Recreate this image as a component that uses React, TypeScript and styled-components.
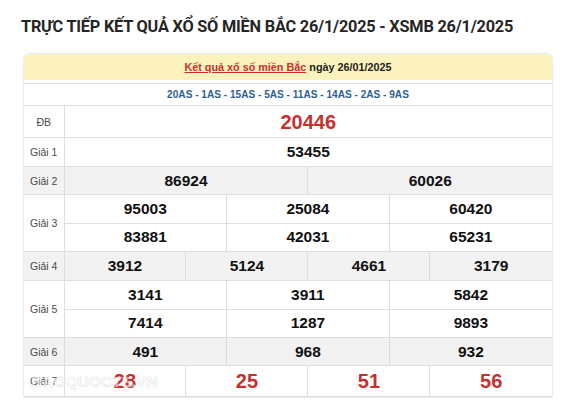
import React from "react";
import styled, { createGlobalStyle } from "styled-components";

const GlobalStyle = createGlobalStyle`
  html, body {
    margin: 0;
    padding: 0;
    background: #fff;
  }
`;

const Page = styled.div`
  width: 561px;
  height: 401px;
  overflow: hidden;
  box-sizing: border-box;
  padding: 17px 0 0 21px;
  position: relative;
`;

const Title = styled.h1`
  margin: 0 0 16px;
  font-family: Roboto, "Liberation Sans", sans-serif;
  font-size: 16.3px;
  font-weight: 700;
  line-height: 20px;
  color: #252525;
  letter-spacing: -0.2px;
  white-space: nowrap;
`;

const Board = styled.div`
  margin-left: 2px;
  width: 530px;
  box-sizing: border-box;
  border: 1px solid #ececec;
  border-radius: 6px 6px 0 0;
  font-family: "Liberation Sans", Arial, sans-serif;
  position: relative;
`;

const Heading = styled.div`
  height: 26px;
  line-height: 26px;
  background: #fcf2bd;
  border-radius: 6px 6px 0 0;
  text-align: center;
  font-size: 10.8px;
  font-weight: 700;
  color: #222;
  margin-bottom: 3px;
`;

const HeadLink = styled.a`
  color: #c9302c;
  text-decoration: underline;
`;

const Table = styled.table`
  width: 100%;
  border-collapse: collapse;
  table-layout: fixed;
`;

const Codes = styled.td`
  height: 21px;
  padding: 0;
  text-align: center;
  font-size: 10.1px;
  font-weight: 700;
  color: #2e5f92;
  border: 1px solid #dedede;
  border-left: none;
  border-right: none;
`;

const Row = styled.tr<{ $shade?: boolean }>`
  background: ${(p) => (p.$shade ? "#f2f2f2" : "#fff")};
`;

const Label = styled.td`
  width: 40px;
  text-align: center;
  font-size: 10.5px;
  color: #4a4a4a;
  border-right: 1px solid #dedede;
  border-bottom: 1px solid #dedede;
  padding: 0;
`;

const Num = styled.td<{ $h: number; $red?: boolean; $big?: boolean }>`
  height: ${(p) => p.$h}px;
  padding: 0;
  text-align: center;
  font-weight: 700;
  font-size: ${(p) => (p.$big ? "20px" : "15.5px")};
  line-height: 18px;
  color: ${(p) => (p.$red ? "#c6312e" : "#111")};
  border-right: 1px solid #dedede;
  border-bottom: 1px solid #dedede;
  &:last-child {
    border-right: none;
  }
`;

const Watermark = styled.div`
  position: absolute;
  left: 7px;
  bottom: 6px;
  font-family: "Liberation Sans", Arial, sans-serif;
  font-size: 15.5px;
  font-weight: 700;
  color: rgba(255, 255, 255, 0.6);
  -webkit-text-stroke: 0.6px rgba(175, 175, 175, 0.4);
  pointer-events: none;
`;

type Prize = {
  label: string;
  rows: string[][];
  h: number;
  shade?: boolean;
  red?: boolean;
  big?: boolean;
};

const prizes: Prize[] = [
  { label: "ĐB", rows: [["20446"]], h: 31, red: true, big: true },
  { label: "Giải 1", rows: [["53455"]], h: 28 },
  { label: "Giải 2", rows: [["86924", "60026"]], h: 27, shade: true },
  {
    label: "Giải 3",
    rows: [
      ["95003", "25084", "60420"],
      ["83881", "42031", "65231"],
    ],
    h: 27.5,
  },
  { label: "Giải 4", rows: [["3912", "5124", "4661", "3179"]], h: 28, shade: true },
  {
    label: "Giải 5",
    rows: [
      ["3141", "3911", "5842"],
      ["7414", "1287", "9893"],
    ],
    h: 27.5,
  },
  { label: "Giải 6", rows: [["491", "968", "932"]], h: 27, shade: true },
  { label: "Giải 7", rows: [["28", "25", "51", "56"]], h: 30, red: true, big: true },
];

export default function App() {
  return (
    <Page>
      <GlobalStyle />
      <Title>TRỰC TIẾP KẾT QUẢ XỔ SỐ MIỀN BẮC 26/1/2025 - XSMB 26/1/2025</Title>
      <Board>
        <Heading>
          <HeadLink>Kết quả xổ số miền Bắc</HeadLink> ngày 26/01/2025
        </Heading>
        <Table>
          <colgroup>
            <col style={{ width: 40 }} />
            {Array.from({ length: 12 }).map((_, i) => (
              <col key={i} />
            ))}
          </colgroup>
          <tbody>
            <tr>
              <Codes colSpan={13}>
                20AS - 1AS - 15AS - 5AS - 11AS - 14AS - 2AS - 9AS
              </Codes>
            </tr>
            {prizes.map((p) =>
              p.rows.map((nums, ri) => (
                <Row key={p.label + ri} $shade={p.shade}>
                  {ri === 0 && <Label rowSpan={p.rows.length}>{p.label}</Label>}
                  {nums.map((n, ni) => (
                    <Num
                      key={ni}
                      colSpan={12 / nums.length}
                      $h={p.h}
                      $red={p.red}
                      $big={p.big}
                    >
                      {n}
                    </Num>
                  ))}
                </Row>
              ))
            )}
          </tbody>
        </Table>
        <Watermark>BAOQUOCTE.VN</Watermark>
      </Board>
    </Page>
  );
}
